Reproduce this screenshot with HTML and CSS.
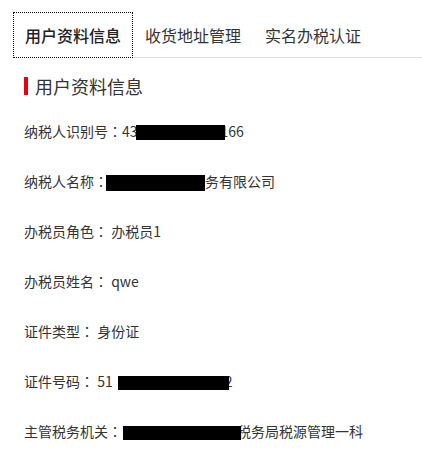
FILE: index.html
```html
<!DOCTYPE html>
<html lang="zh-CN">
<head>
<meta charset="utf-8">
<title>用户资料信息</title>
<link rel="stylesheet" href="styles.css">
</head>
<body>
<div class="tabs">
  <div class="tab active">用户资料信息</div>
  <div class="tab">收货地址管理</div>
  <div class="tab">实名办税认证</div>
</div>
<div class="content">
  <h2 class="title"><span class="bar"></span>用户资料信息</h2>
  <div class="rows">
    <div class="row">纳税人识别号<span class="colon" lang="ja">：</span>43<span class="redact r1"></span>166</div>
    <div class="row">纳税人名称<span class="colon" lang="ja">：</span><span class="redact r2"></span>务有限公司</div>
    <div class="row">办税员角色<span class="colon" lang="ja">：</span> 办税员1</div>
    <div class="row">办税员姓名<span class="colon" lang="ja">：</span> qwe</div>
    <div class="row">证件类型<span class="colon" lang="ja">：</span> 身份证</div>
    <div class="row">证件号码<span class="colon" lang="ja">：</span> 51<span class="redact r6"></span>2</div>
    <div class="row">主管税务机关<span class="colon" lang="ja">：</span><span class="redact r7"></span>税务局税源管理一科</div>
  </div>
</div>
</body>
</html>
```
FILE: styles.css
```css
html, body {
  margin: 0;
  padding: 0;
  background: #fff;
}
body {
  font-family: "Noto Sans CJK SC", "Microsoft YaHei", sans-serif;
  color: #333;
}
.tabs {
  display: flex;
  margin: 12px 0 0 13px;
  border-bottom: 1px solid #ddd;
}
.tab {
  font-size: 16px;
  line-height: 44px;
  height: 44px;
  padding: 0 11px;
  border: 1px solid transparent;
  margin-bottom: -1px;
  color: #333;
  white-space: nowrap;
}
.tab.active {
  border: 1px dotted #000;
  font-weight: 500;
  color: #222;
  background: #fff;
}
.content {
  padding-left: 24px;
}
.title {
  display: flex;
  align-items: center;
  gap: 7px;
  margin: 19px 0 0;
  font-size: 18px;
  line-height: 18px;
  font-weight: normal;
  color: #333;
}
.bar {
  width: 4px;
  height: 18px;
  background: #e60012;
}
.rows {
  margin-top: 11px;
}
.row {
  height: 50px;
  line-height: 50px;
  font-size: 14px;
  white-space: nowrap;
}
.colon {
  font-family: "Noto Sans CJK JP", "Noto Sans CJK TC", sans-serif;
}
.redact {
  position: relative;
  display: inline-block;
  background: #000;
  vertical-align: middle;
}
.r1 {
  width: 89px;
  height: 15px;
  margin-left: -2px;
  margin-right: -4px;
  top: -1px;
}
.r2 {
  width: 99px;
  height: 16px;
  margin-left: -2px;
}
.r6 {
  width: 111px;
  height: 14px;
  margin-left: 5px;
  margin-right: -4px;
}
.r7 {
  width: 118px;
  height: 14px;
  margin-left: 1px;
  margin-right: -4px;
}
```
